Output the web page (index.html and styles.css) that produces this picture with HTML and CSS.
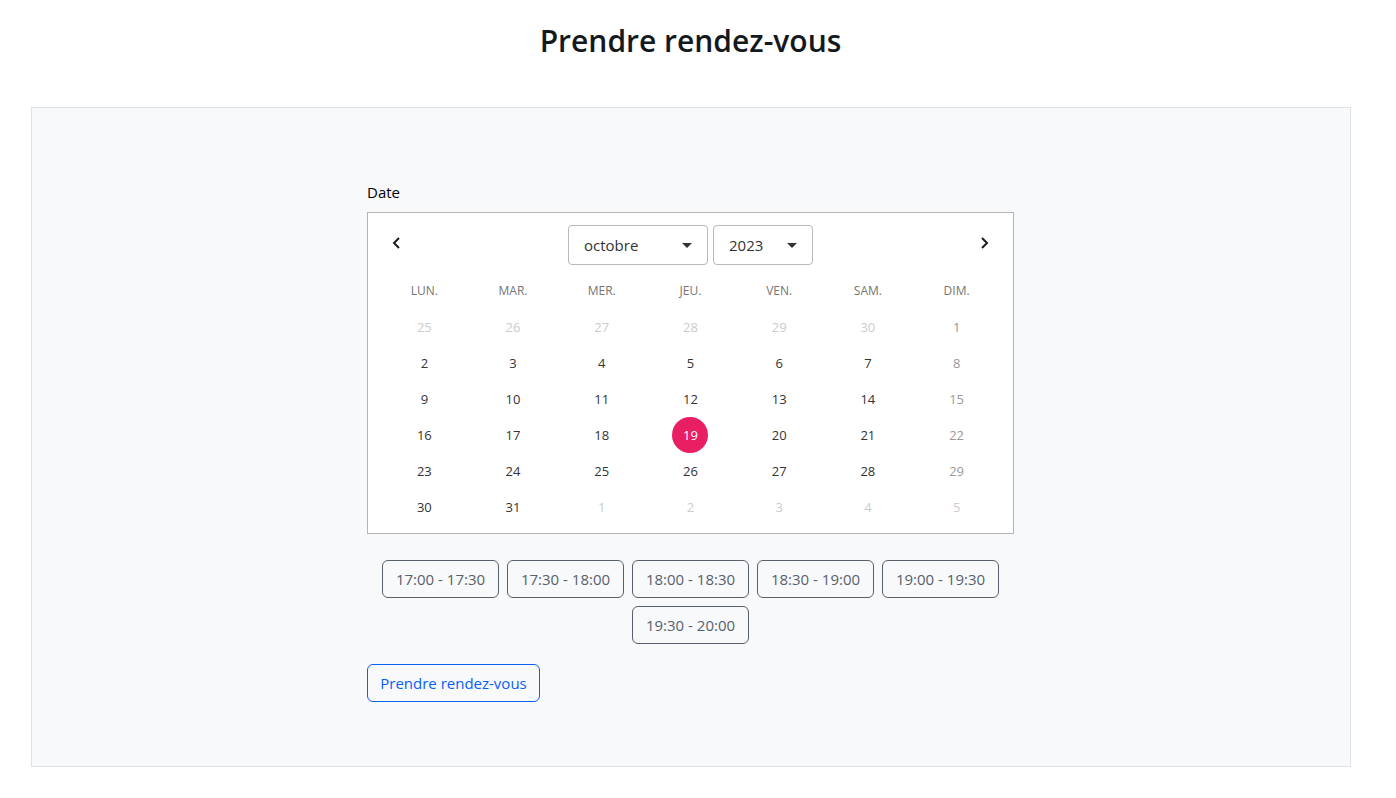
FILE: index.html
```html
<!DOCTYPE html>
<html lang="fr">
<head>
<meta charset="utf-8">
<meta name="viewport" content="width=device-width, initial-scale=1">
<title>Prendre rendez-vous</title>
<link rel="stylesheet" href="styles.css">
</head>
<body>
<main class="page">
  <h1 class="title">Prendre rendez-vous</h1>
  <section class="panel">
    <form class="booking">
      <p class="label" id="date-label">Date</p>
      <div class="calendar" role="group" aria-labelledby="date-label">
        <div class="calendar-head">
          <button class="nav" type="button" aria-label="Mois précédent"><svg width="8" height="12" viewBox="0 0 8 12"><path d="M7 1 2 6l5 5" fill="none" stroke="currentColor" stroke-width="2"/></svg></button>
          <div class="pickers">
            <span class="picker picker-month"><select class="select" aria-label="Mois"><option>octobre</option><option>novembre</option></select><svg class="caret" width="10" height="5" viewBox="0 0 10 5"><path d="M0 0h10L5 5z" fill="currentColor"/></svg></span>
            <span class="picker picker-year"><select class="select" aria-label="Année"><option>2023</option><option>2024</option></select><svg class="caret" width="10" height="5" viewBox="0 0 10 5"><path d="M0 0h10L5 5z" fill="currentColor"/></svg></span>
          </div>
          <button class="nav" type="button" aria-label="Mois suivant"><svg width="8" height="12" viewBox="0 0 8 12"><path d="m1 1 5 5-5 5" fill="none" stroke="currentColor" stroke-width="2"/></svg></button>
        </div>
        <table class="month">
          <thead><tr><th>LUN.</th><th>MAR.</th><th>MER.</th><th>JEU.</th><th>VEN.</th><th>SAM.</th><th>DIM.</th></tr></thead>
          <tbody>
            <tr><td><button type="button" class="day outside" disabled>25</button></td><td><button type="button" class="day outside" disabled>26</button></td><td><button type="button" class="day outside" disabled>27</button></td><td><button type="button" class="day outside" disabled>28</button></td><td><button type="button" class="day outside" disabled>29</button></td><td><button type="button" class="day outside" disabled>30</button></td><td><button type="button" class="day closed" disabled>1</button></td></tr>
            <tr><td><button type="button" class="day">2</button></td><td><button type="button" class="day">3</button></td><td><button type="button" class="day">4</button></td><td><button type="button" class="day">5</button></td><td><button type="button" class="day">6</button></td><td><button type="button" class="day">7</button></td><td><button type="button" class="day closed" disabled>8</button></td></tr>
            <tr><td><button type="button" class="day">9</button></td><td><button type="button" class="day">10</button></td><td><button type="button" class="day">11</button></td><td><button type="button" class="day">12</button></td><td><button type="button" class="day">13</button></td><td><button type="button" class="day">14</button></td><td><button type="button" class="day closed" disabled>15</button></td></tr>
            <tr><td><button type="button" class="day">16</button></td><td><button type="button" class="day">17</button></td><td><button type="button" class="day">18</button></td><td><button type="button" class="day selected" aria-pressed="true">19</button></td><td><button type="button" class="day">20</button></td><td><button type="button" class="day">21</button></td><td><button type="button" class="day closed" disabled>22</button></td></tr>
            <tr><td><button type="button" class="day">23</button></td><td><button type="button" class="day">24</button></td><td><button type="button" class="day">25</button></td><td><button type="button" class="day">26</button></td><td><button type="button" class="day">27</button></td><td><button type="button" class="day">28</button></td><td><button type="button" class="day closed" disabled>29</button></td></tr>
            <tr><td><button type="button" class="day">30</button></td><td><button type="button" class="day">31</button></td><td><button type="button" class="day outside" disabled>1</button></td><td><button type="button" class="day outside" disabled>2</button></td><td><button type="button" class="day outside" disabled>3</button></td><td><button type="button" class="day outside" disabled>4</button></td><td><button type="button" class="day outside" disabled>5</button></td></tr>
          </tbody>
        </table>
      </div>
      <div class="slots">
        <button class="btn slot" type="button">17:00 - 17:30</button>
        <button class="btn slot" type="button">17:30 - 18:00</button>
        <button class="btn slot" type="button">18:00 - 18:30</button>
        <button class="btn slot" type="button">18:30 - 19:00</button>
        <button class="btn slot" type="button">19:00 - 19:30</button>
        <button class="btn slot" type="button">19:30 - 20:00</button>
      </div>
      <button class="btn submit" type="submit">Prendre rendez-vous</button>
    </form>
  </section>
</main>
</body>
</html>
```
FILE: styles.css
```css
* { box-sizing: border-box; }

body {
  margin: 0;
  padding: 0 15px 0 0;
  background: #fff;
  color: #000;
  font: 15px/24px "Open Sans", "Noto Sans", sans-serif;
}

button, select { font: inherit; cursor: pointer; }

.page {
  max-width: 1320px;
  margin: 0 auto;
  padding: 21px 0 31px;
}

.title {
  margin: 0 0 46px;
  color: #14191e;
  font-size: 30px;
  font-weight: 600;
  line-height: 40px;
  text-align: center;
}

.panel {
  padding: 72px 0 64px;
  border: 1px solid #dee2e6;
  background: #f8f9fb;
}

.booking {
  width: calc(50% - 12px);
  min-width: 320px;
  margin: 0 auto;
}

.label { margin: 0 0 8px; }

.calendar {
  padding: 12px 12px 8px;
  border: 1px solid #b4b4b4;
  background: #fff;
}

.calendar-head {
  display: flex;
  justify-content: space-between;
  align-items: flex-start;
  margin-bottom: 8px;
}

.nav {
  display: grid;
  place-items: center;
  width: 32px;
  height: 36px;
  padding: 0;
  border: 0;
  background: none;
  color: #1c1c1c;
}

.pickers { display: flex; gap: 5px; }

.picker { display: grid; align-items: center; }
.picker-month { width: 140px; }
.picker-year { width: 100px; }

.select {
  grid-area: 1 / 1;
  width: 100%;
  height: 40px;
  padding: 0 32px 0 15px;
  border: 1px solid #b8b8b8;
  border-radius: 4px;
  appearance: none;
  background: #fff;
  color: #333;
}

.caret {
  grid-area: 1 / 1;
  justify-self: end;
  margin-right: 16px;
  color: #333;
  pointer-events: none;
}

.month {
  width: 100%;
  table-layout: fixed;
  border-collapse: collapse;
}

.month th {
  height: 36px;
  padding: 0;
  color: #757575;
  font-size: 12px;
  font-weight: 400;
}

.month td { padding: 0; }

.day {
  display: block;
  width: 36px;
  height: 36px;
  margin: 0 auto;
  padding: 0;
  border: 0;
  border-radius: 50%;
  background: none;
  color: #333;
  font-size: 13px;
  text-align: center;
}

.outside { color: #ccc; }
.closed { color: #999; }
.selected { background: #e91e63; color: #fff; }

.slots {
  display: flex;
  flex-wrap: wrap;
  justify-content: center;
  gap: 8px;
  margin: 26px 0 20px;
}

.btn {
  height: 38px;
  padding: 0 12px;
  border: 1px solid;
  border-radius: 6px;
  background: none;
}

.slot {
  min-width: 117px;
  border-color: #56616b;
  color: #56616b;
}

.submit {
  min-width: 173px;
  border-color: #0860f4;
  color: #0860f4;
}
```
